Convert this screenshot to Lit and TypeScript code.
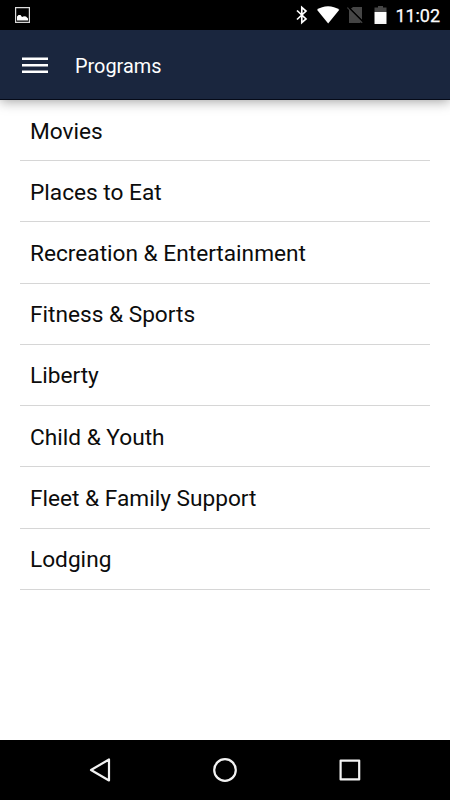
import { LitElement, html, css, svg } from "lit";
import { customElement } from "lit/decorators.js";

const PROGRAMS = ["Movies", "Places to Eat", "Recreation & Entertainment", "Fitness & Sports", "Liberty", "Child & Youth", "Fleet & Family Support", "Lodging"];

@customElement("app-root")
export class AppRoot extends LitElement {
  static styles = css`
    :host { display: flex; flex-direction: column; width: 450px; height: 800px; background: #fff; font-family: Roboto, sans-serif; overflow: hidden; }
    svg { display: block; flex: none; }
    .status { height: 30px; flex: none; background: #000; }
    .status text { font: 400 18px Roboto, sans-serif; fill: #fff; stroke: #fff; stroke-width: 0.25px; }
    .bar { height: 70px; flex: none; background: #1a263e; display: flex; align-items: center; padding-left: 22px; gap: 27px; color: #fff; font-size: 19.9px; border-bottom: 1px solid #050a18; box-shadow: 0 1px 12px rgba(0,0,0,.4); box-sizing: border-box; }
    .title { padding-top: 4px; }
    .list { flex: 1; padding: 0 20px; }
    .row { height: 61.22px; box-sizing: border-box; border-bottom: 1px solid #d6d6d6; padding: 2px 0 0 10px; display: flex; align-items: center; font-size: 22.67px; color: #0c0c0c; }
    .nav { height: 60px; flex: none; background: #000; }
  `;
  render() {
    return html`
      <svg class="status" width="450" height="30" viewBox="0 0 450 30">
        <path fill="none" stroke="#ddd" stroke-width="1.2" d="M15.600 7.600h13.800v14.800H15.600z"/>
        <path fill="#fff" d="M17 20.500v-4l1.500-1.500h2l1.500 2 2-.8 2 .3 2 2v2z"/>
        <path fill="none" stroke="#fff" stroke-width="1.700" d="M297 10.500l9 8.500-4.200 3.700V7.300L306 11l-9 8.500"/>
        <path fill="#fff" d="M317 9.700C323 5 333 5 339.300 9.700L328.200 23.500z"/>
        <path fill="#464646" d="M353 7h9v13L350.800 8.800zM347 8l1-1 14.800 15-1.100 1.200-1-1-.7.800H349V10z"/>
        <path stroke="#000" stroke-width="1.300" d="M348.500 7.200l14.500 14.600"/>
        <path fill="#464646" d="M374.500 7.500h3.500V6h5v1.500h3.500V12h-12z"/><path fill="#fff" d="M374.500 12h12v12h-12z"/>
        <text x="395.500" y="22" textLength="44.500">11:02</text>
      </svg>
      <div class="bar">
        <svg width="26" height="18" viewBox="0 0 26 18"><path fill="#fff" d="M0 1.500h26V4H0zM0 8h26v2.500H0zm0 6.500h26V17H0z"/></svg>
        <div class="title">Programs</div>
      </div>
      <div class="list">${PROGRAMS.map((p) => html`<div class="row">${p}</div>`)}</div>
      <svg class="nav" width="450" height="60" viewBox="0 0 450 60">${svg`
        <g fill="none" stroke="#f2f2f2" stroke-width="2.200" stroke-linejoin="round"><path d="M109 19.500v21L91 30z"/><circle cx="225" cy="30" r="10.800"/><path d="M340.600 20.600h18.600v18.800h-18.600z"/></g>`}
      </svg>`;
  }
}
